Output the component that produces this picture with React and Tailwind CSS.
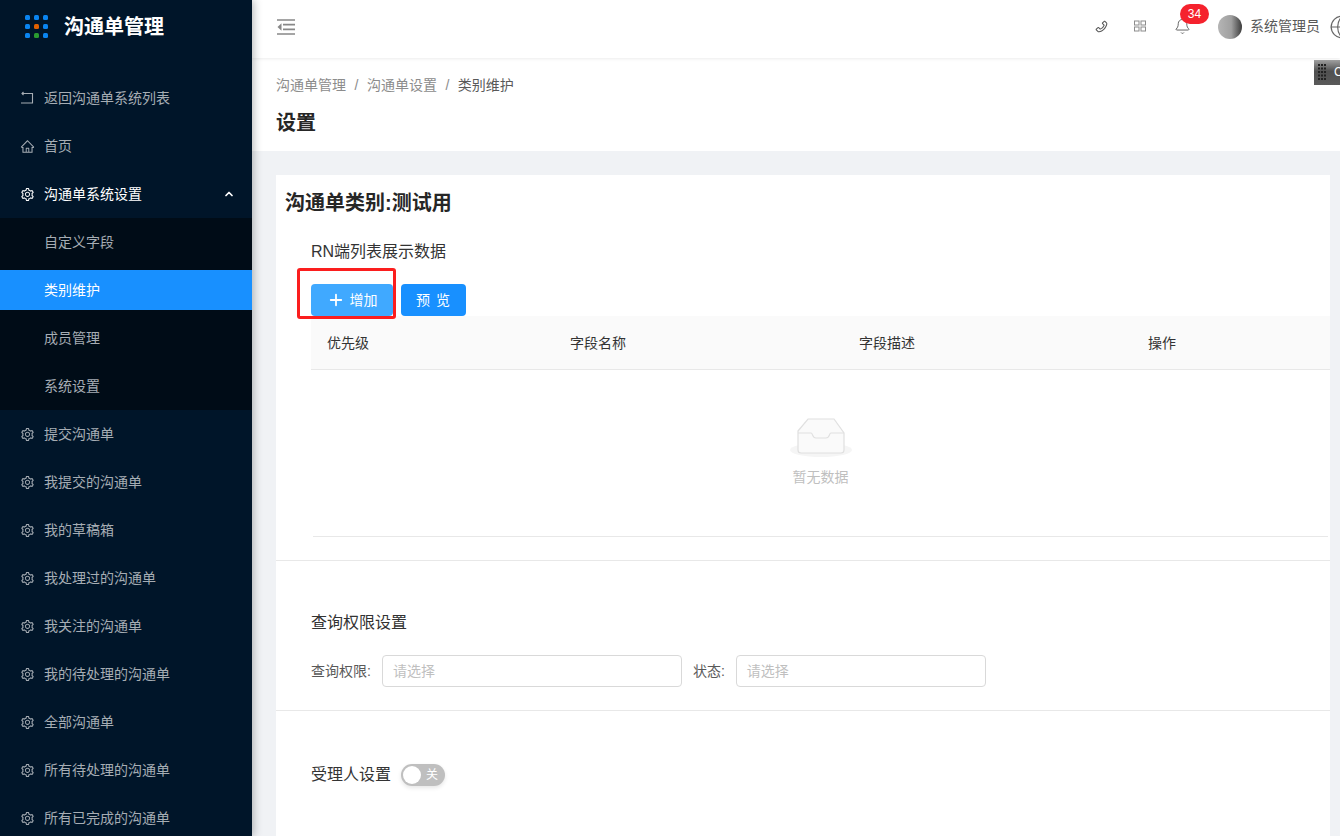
import { Plus, ChevronUp, Bell, Globe } from "lucide-react";
import { AiOutlineSetting, AiOutlineHome, AiOutlinePhone } from "react-icons/ai";

const cjk = `font-['Liberation_Sans','Noto_Sans_CJK_SC',sans-serif]`;

const topMenu = [
  { label: "返回沟通单系统列表", icon: "back" },
  { label: "首页", icon: "home" },
];

const subMenu = ["自定义字段", "类别维护", "成员管理", "系统设置"];

const restMenu = [
  "提交沟通单",
  "我提交的沟通单",
  "我的草稿箱",
  "我处理过的沟通单",
  "我关注的沟通单",
  "我的待处理的沟通单",
  "全部沟通单",
  "所有待处理的沟通单",
  "所有已完成的沟通单",
];

function Logo() {
  const colors = ["#0a84f0", "#0a84f0", "#0a84f0", "#0a84f0", "#e06000", "#0a84f0", "#0a84f0", "#2a9a30", "#0a84f0"];
  return (
    <div className="grid grid-cols-3 gap-[4px] w-[24px] pt-[1px] pl-[1px]">
      {colors.map((c, i) => (
        <span key={i} className="w-[5px] h-[5px] rounded-[1.5px]" style={{ background: c }} />
      ))}
    </div>
  );
}

function BackIcon() {
  return (
    <svg width="14" height="14" viewBox="0 0 14 14" fill="none" stroke="currentColor" strokeWidth="1.100">
      <path d="M2 2.500h10.500v9.500H1" />
      <path d="M3.500 1 2 2.500 3.500 4" />
    </svg>
  );
}

function MenuItem({ label, icon, open }) {
  return (
    <div className={`flex items-center h-10 mb-2 pl-5 pr-[17px] text-sm ${open ? "text-white" : "text-[#a6adb4]"}`}>
      <span className="w-6 flex items-center">
        {icon === "back" && <BackIcon />}
        {icon === "home" && <AiOutlineHome size={15} />}
        {!icon && <AiOutlineSetting size={15} />}
      </span>
      <span className="flex-1">{label}</span>
      {open && <ChevronUp size={12} strokeWidth={3.500} />}
    </div>
  );
}

function Sidebar() {
  return (
    <div className="w-[252px] shrink-0 bg-[#001529] shadow-[2px_0_8px_rgba(29,35,41,0.3)] relative z-10">
      <div className="h-[78px] flex items-start pl-6 pt-[14px]">
        <Logo />
        <span className="ml-[16px] text-white text-xl font-bold leading-[26px]">沟通单管理</span>
      </div>
      {topMenu.map((m) => (
        <MenuItem key={m.label} label={m.label} icon={m.icon} />
      ))}
      <div className="h-11">
        <MenuItem label="沟通单系统设置" open />
      </div>
      <div className="bg-[#000c17] py-1 flex flex-col gap-2">
        {subMenu.map((s) => (
          <div
            key={s}
            className={`h-10 pl-[44px] flex items-center text-sm ${
              s === "类别维护" ? "bg-[#1890ff] text-white" : "text-[#a6adb4]"
            }`}
          >
            {s}
          </div>
        ))}
      </div>
      <div className="pt-1">
        {restMenu.map((m) => (
          <MenuItem key={m} label={m} />
        ))}
      </div>
    </div>
  );
}

function Header() {
  return (
    <div className="h-[58px] shrink-0 bg-white flex items-center pl-[25px] pb-[5px] shadow-[0_1px_3px_rgba(0,0,0,0.08)] relative">
      <svg width="18" height="16" viewBox="0 0 18 16" fill="none" stroke="#888" strokeWidth="1.700">
        <path d="M0 1h18M6 5.700h12M6 10.300h12M0 15h18" />
        <path d="M4.500 4.200 0.500 8l4 3.800z" fill="#888" stroke="none" />
      </svg>
      <div className="ml-auto flex items-center text-[#595959]">
        <AiOutlinePhone size={15} className="mr-[25px]" />
        <svg width="12" height="12" viewBox="0 0 12 12" fill="none" stroke="#8c8c8c" strokeWidth="1" className="mr-[28px] mb-[2px]">
          <rect x="0.500" y="1" width="4.500" height="4" />
          <rect x="7" y="1" width="4.500" height="4" />
          <rect x="0.500" y="7" width="4.500" height="4" />
          <rect x="7" y="7" width="4.500" height="4" />
        </svg>
        <div className="relative mr-[27px]">
          <Bell size={17} strokeWidth={1.300} />
          <span className="absolute left-[6px] top-[-14px] h-5 w-[29px] rounded-full bg-[#f5222d] text-white text-xs leading-5 text-center">
            34
          </span>
        </div>
        <span className="w-6 h-6 rounded-full bg-[linear-gradient(90deg,#b5b5b5_0%,#a0a0a0_55%,#3c3c3c_100%)]" />
        <span className="ml-2 mb-[1px] text-sm text-[#595959]">系统管理员</span>
        <Globe size={26} strokeWidth={1.100} className="ml-[9px] mr-[-15px] shrink-0 text-[#666]" />
      </div>
    </div>
  );
}

function Toolbar() {
  return (
    <div className="flex items-center gap-2 mt-[22px] relative">
      <span className="h-8 w-[82px] rounded bg-[#40a9ff] text-white text-sm flex items-center justify-center gap-[5px]">
        <Plus size={18} strokeWidth={2.400} />
        增加
      </span>
      <span className="h-8 w-[65px] rounded bg-[#1890ff] text-white text-sm flex items-center justify-center tracking-[1px]">
        预 览
      </span>
      <span className="absolute left-[-14px] top-[-16px] w-[99px] h-[51px] border-[3px] border-[#fb1e1e] rounded-[3px]" />
    </div>
  );
}

function RuleTable() {
  return (
    <div>
      <div className="h-[54px] flex items-center bg-[#fafafa] border-b border-[#e8e8e8] text-sm text-[#333]">
        <span className="w-[259px] pl-4">优先级</span>
        <span className="w-[289px]">字段名称</span>
        <span className="w-[289px]">字段描述</span>
        <span>操作</span>
      </div>
      <div className="h-[167px] mx-[2px] flex flex-col items-center pt-[47px] border-b border-[#e8e8e8]">
        <svg width="64" height="41" viewBox="0 0 64 41">
          <ellipse cx="32" cy="33" rx="31" ry="7" fill="#f5f5f5" />
          <path
            d="M9 14 19 2h26l10 14v17a3 3 0 0 1-3 3H12a3 3 0 0 1-3-3z"
            fill="#fafafa"
            stroke="#e0e0e0"
            strokeWidth="1.200"
          />
          <path d="M9 16h13c2 0 1 5 5 5h10c4 0 3-5 5-5h13" fill="none" stroke="#e0e0e0" strokeWidth="1.200" />
        </svg>
        <span className="mt-[9px] text-sm text-[#bfbfbf]">暂无数据</span>
      </div>
    </div>
  );
}

function SelectBox({ width }) {
  return (
    <span className={`${width} h-8 rounded border border-[#d9d9d9] bg-white pl-[10px] flex items-center text-sm text-[#bfbfbf]`}>
      请选择
    </span>
  );
}

function Content() {
  return (
    <div className="flex-1 bg-[#f0f2f5] overflow-hidden">
      <div className="h-[93px] bg-white pl-[24px] pt-[17px]">
        <div className="flex items-center text-sm leading-[20px] text-[#8c8c8c]">
          <span>沟通单管理</span>
          <span className="mx-[8.5px]">/</span>
          <span>沟通单设置</span>
          <span className="mx-[8.5px]">/</span>
          <span className="text-[#595959]">类别维护</span>
        </div>
        <div className="mt-[14px] text-xl font-semibold leading-[28px] text-[#262626]">设置</div>
      </div>
      <div className="mt-6 ml-6 mr-[10px] bg-white h-[700px]">
        <div className="pl-[9px] pt-[13px] text-xl font-bold leading-[30px] text-[#262626]">沟通单类别:测试用</div>
        <div className="pl-[35px]">
          <div className="mt-[24px] text-base leading-[20px] text-[#333]">RN端列表展示数据</div>
          <Toolbar />
          <RuleTable />
        </div>
        <div className="mt-[23px] border-t border-[#e8e8e8] pl-[35px] pt-[52px] pb-[23px]">
          <div className="text-base leading-[20px] text-[#333]">查询权限设置</div>
          <div className="mt-[22px] flex items-center text-sm text-[#595959]">
            <span className="mr-[11px]">查询权限:</span>
            <SelectBox width="w-[300px]" />
            <span className="ml-[11px] mr-[11px]">状态:</span>
            <SelectBox width="w-[250px]" />
          </div>
        </div>
        <div className="border-t border-[#e8e8e8] pl-[35px] pt-[53px] flex items-center">
          <span className="text-base leading-[20px] text-[#333]">受理人设置</span>
          <span className="relative ml-[10px] w-[44px] h-[22px] rounded-full bg-[#bfbfbf] text-white text-xs leading-[22px] pl-[25px] shadow-[0_2px_4px_rgba(0,0,0,0.1)]">
            关
            <span className="absolute left-[2px] top-[2px] w-[18px] h-[18px] rounded-full bg-white" />
          </span>
        </div>
      </div>
    </div>
  );
}

function FloatingWidget() {
  const dots = [];
  for (let r = 0; r < 5; r++) {
    for (let c = 0; c < 3; c++) {
      dots.push(<rect key={`${r}-${c}`} x={c * 3} y={r * 3.500} width="2" height="2" fill="#222" />);
    }
  }
  return (
    <div className="absolute left-[1314px] top-[60px] w-[26px] h-[25px] overflow-hidden bg-[linear-gradient(180deg,#a0a0a0_0%,#505050_45%,#5a5a5a_100%)] text-white text-xs leading-[25px] pl-[20px]">
      <svg width="9" height="17" viewBox="0 0 9 17" className="absolute left-[4px] top-[4px]">
        {dots}
      </svg>
      C
    </div>
  );
}

export default function App() {
  return (
    <div className={`flex h-[836px] w-[1340px] overflow-hidden relative ${cjk}`}>
      <Sidebar />
      <div className="flex-1 flex flex-col min-w-0">
        <Header />
        <Content />
      </div>
      <FloatingWidget />
    </div>
  );
}
